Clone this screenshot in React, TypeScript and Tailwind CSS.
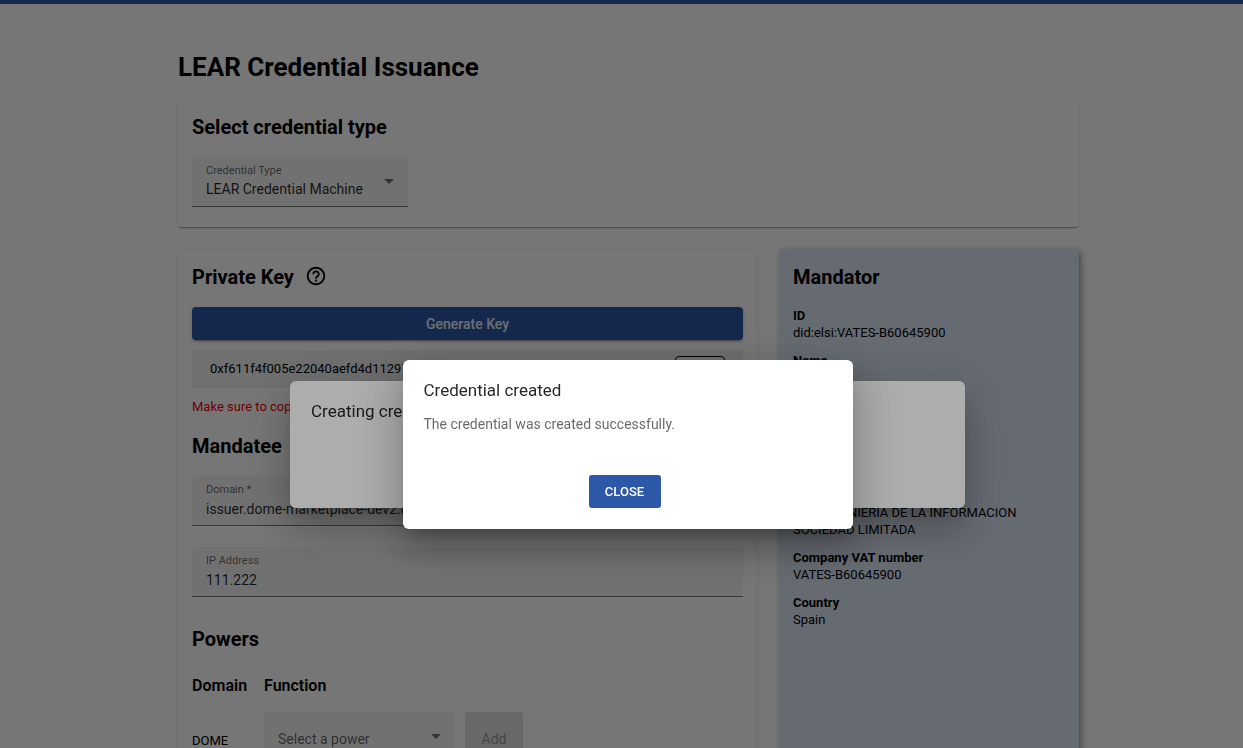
import { useState } from "react";
import { MdHelpOutline } from "react-icons/md";

const mandator = [
  { label: "ID", value: "did:elsi:VATES-B60645900" },
  { label: "Name", value: "-" },
  { label: "Email", value: "-" },
  { label: "Serial", value: "-" },
  { label: "Entity", value: "IN2, INGENIERIA DE LA INFORMACION SOCIEDAD LIMITADA" },
  { label: "Company VAT number", value: "VATES-B60645900" },
  { label: "Country", value: "Spain" },
];

const cardShadow = "shadow-[0_2px_1px_-1px_rgba(0,0,0,0.2),0_1px_1px_0_rgba(0,0,0,0.14),0_1px_3px_0_rgba(0,0,0,0.12)]";
const dialogShadow =
  "shadow-[0_11px_15px_-7px_rgba(0,0,0,0.2),0_24px_38px_3px_rgba(0,0,0,0.14),0_9px_46px_8px_rgba(0,0,0,0.12)]";

function Caret() {
  return (
    <svg viewBox="0 0 10 5" className="pointer-events-none absolute right-3.5 h-[5px] w-[10px] fill-black/55">
      <path d="M0 0h10L5 5z" />
    </svg>
  );
}

function TextField({ id, label, value }: { id: string; label: string; value: string }) {
  const [text, setText] = useState(value);

  return (
    <div className="flex h-[50px] flex-col rounded-t border-b border-black/50 bg-[#f5f5f5] px-3.5 pt-1.5">
      <label htmlFor={id} className="text-[11px] leading-4 text-black/60">
        {label}
      </label>
      <input
        id={id}
        value={text}
        onChange={(e) => setText(e.target.value)}
        className="h-[22px] w-full bg-transparent text-sm text-black/85 outline-none"
      />
    </div>
  );
}

function Heading({ children }: { children: React.ReactNode }) {
  return <h2 className="text-[20px] leading-7 font-bold">{children}</h2>;
}

export default function App() {
  const [created, setCreated] = useState(true);

  return (
    <div className="h-screen overflow-hidden bg-white font-['Roboto',sans-serif] text-[13px] text-black">
      <div className="h-1 bg-[#2d58a7]" />

      <main className="pl-3.5">
        <div className="mx-auto w-full max-w-[901px] pt-[45px]">
          <h1 className="text-[26px] leading-9 font-bold">LEAR Credential Issuance</h1>

          <section className={`mt-[13px] rounded bg-white px-3.5 pt-[15px] pb-5 ${cardShadow}`}>
            <Heading>Select credential type</Heading>
            <div className="relative mt-4 flex h-[50px] w-[216px] items-center rounded-t border-b border-black/50 bg-[#f5f5f5]">
              <label htmlFor="type" className="absolute top-1.5 left-3.5 text-[11px] leading-4 text-black/60">
                Credential Type
              </label>
              <select
                id="type"
                className="h-full w-full appearance-none bg-transparent px-3.5 pt-3.5 text-sm text-black/85 outline-none"
              >
                <option>LEAR Credential Machine</option>
              </select>
              <Caret />
            </div>
          </section>

          <div className="mt-[22px] flex gap-[22px]">
            <section className={`h-[640px] min-w-0 flex-1 rounded bg-white px-3.5 pt-3.5 ${cardShadow}`}>
              <div className="flex items-start gap-[11px]">
                <Heading>Private Key</Heading>
                <MdHelpOutline className="mt-0.5 size-[22px]" />
              </div>
              <button
                type="button"
                className="mt-4 h-[33px] w-full rounded bg-[#2d58a7] text-sm font-medium text-white/90 shadow-[0_3px_1px_-2px_rgba(0,0,0,0.2),0_2px_2px_0_rgba(0,0,0,0.14),0_1px_5px_0_rgba(0,0,0,0.12)]"
              >
                Generate Key
              </button>
              <div className="mt-2.5 flex h-[38px] items-center justify-between gap-4 bg-[#f2f2f2] px-[18px]">
                <span className="truncate">0xf611f4f005e22040aefd4d11297</span>
                <button type="button" className="h-[26px] w-[50px] rounded border border-black">
                  Copy
                </button>
              </div>
              <p className="mt-2.5 leading-[18px] text-[#f00000]">Make sure to copy your private key.</p>

              <div className="my-4">
                <Heading>Mandatee</Heading>
              </div>
              <div className="flex flex-col gap-[21px]">
                <TextField id="domain" label="Domain *" value="issuer.dome-marketplace-dev2.org" />
                <TextField id="ip" label="IP Address" value="111.222" />
              </div>

              <div className="mt-7">
                <Heading>Powers</Heading>
              </div>
              <div className="mt-[22px] grid grid-cols-[58px_1fr] gap-x-3.5 gap-y-[15px]">
                <h3 className="text-base leading-[22px] font-semibold">Domain</h3>
                <h3 className="text-base leading-[22px] font-semibold">Function</h3>
                <span className="self-center pt-2">DOME</span>
                <div className="flex gap-2.5">
                  <div className="relative flex h-[50px] w-[191px] items-center rounded-t border-b border-black/50 bg-[#f5f5f5]">
                    <select
                      aria-label="Select a power"
                      className="h-full w-full appearance-none bg-transparent px-3.5 pt-1 text-sm text-black/60 outline-none"
                    >
                      <option>Select a power</option>
                    </select>
                    <Caret />
                  </div>
                  <button type="button" disabled className="w-[58px] rounded bg-[#e0e0e0] pt-1 text-sm text-black/35">
                    Add
                  </button>
                </div>
              </div>
            </section>

            <aside className="w-[300px] shrink-0 rounded bg-[#dde8f6] px-3.5 pt-3.5 shadow-[2px_2px_6px_rgba(0,0,0,0.4)]">
              <Heading>Mandator</Heading>
              <dl className="mt-4 flex flex-col gap-[11px] leading-[17px]">
                {mandator.map((item) => (
                  <div key={item.label}>
                    <dt className="font-bold">{item.label}</dt>
                    <dd>{item.value}</dd>
                  </div>
                ))}
              </dl>
            </aside>
          </div>
        </div>
      </main>

      <div className="fixed inset-0 flex items-center justify-center bg-black/32 pt-[141px] pl-3">
        <div role="dialog" aria-label="Creating credential" className={`h-[127px] w-[675px] rounded-md bg-white px-[21px] pt-[18px] ${dialogShadow}`}>
          <h2 className="text-[17px] leading-6 text-black/85">Creating credential...</h2>
        </div>
      </div>

      {created && (
        <div className="fixed inset-0 flex items-center justify-center bg-black/32 pt-[141px] pl-3">
          <div role="dialog" aria-label="Credential created" className={`w-[450px] rounded-md bg-white px-[21px] pt-[18px] pb-[21px] ${dialogShadow}`}>
            <h2 className="text-[17px] leading-6 text-black/85">Credential created</h2>
            <p className="mt-3 text-sm leading-5 text-black/60">The credential was created successfully.</p>
            <div className="mt-[41px] flex justify-center pr-1.5">
              <button
                type="button"
                onClick={() => setCreated(false)}
                className="h-[33px] w-[72px] rounded-[3px] bg-[#2d58a7] font-medium text-white"
              >
                CLOSE
              </button>
            </div>
          </div>
        </div>
      )}
    </div>
  );
}
